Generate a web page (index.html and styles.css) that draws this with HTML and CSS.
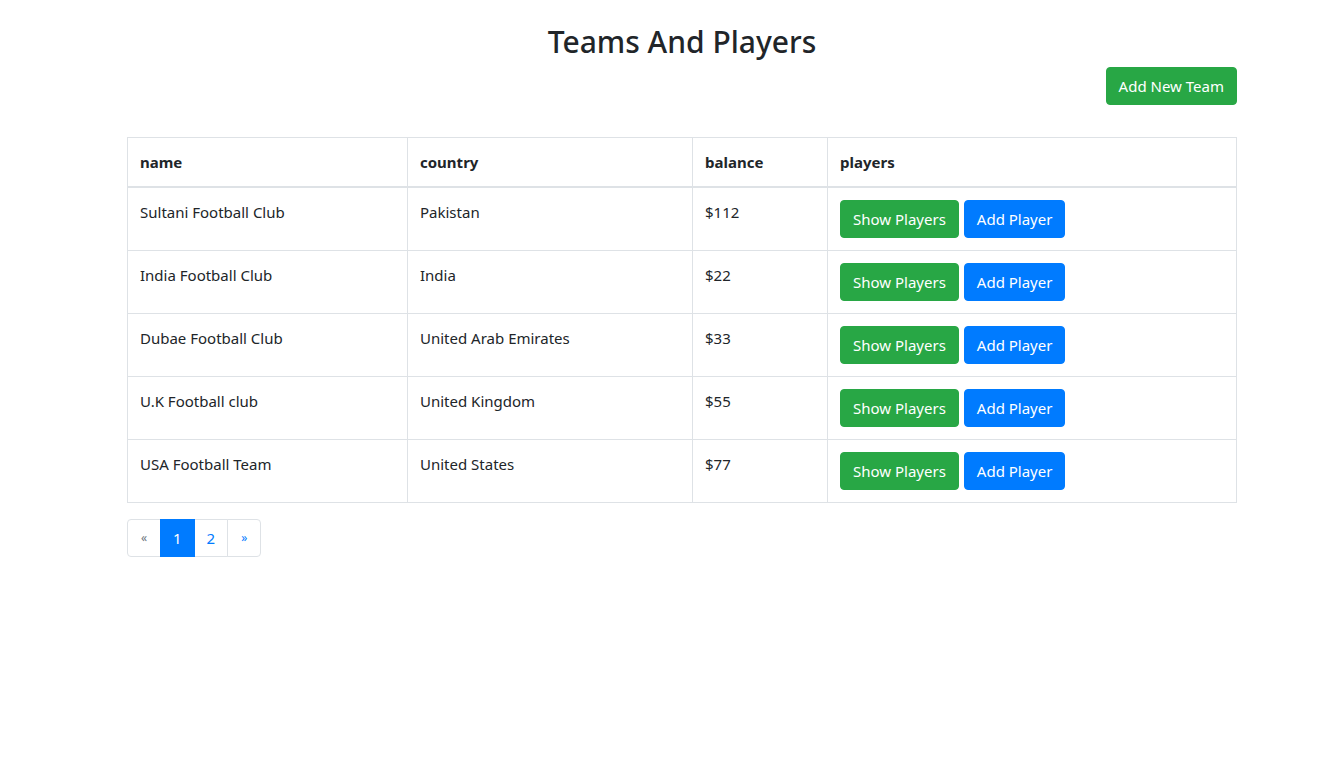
FILE: index.html
```html
<!DOCTYPE html>
<html lang="en">
<head>
<meta charset="utf-8">
<title>Teams And Players</title>
<link rel="stylesheet" href="styles.css">
</head>
<body>
<div class="page">
  <div class="container">
    <h2 class="title">Teams And Players</h2>
    <div class="actions">
      <button class="btn btn-success">Add New Team</button>
    </div>
    <table class="table">
      <thead>
        <tr>
          <th class="c-name">name</th>
          <th class="c-country">country</th>
          <th class="c-balance">balance</th>
          <th>players</th>
        </tr>
      </thead>
      <tbody>
        <tr>
          <td>Sultani Football Club</td>
          <td>Pakistan</td>
          <td>$112</td>
          <td><div class="btns"><button class="btn btn-success">Show Players</button><button class="btn btn-primary">Add Player</button></div></td>
        </tr>
        <tr>
          <td>India Football Club</td>
          <td>India</td>
          <td>$22</td>
          <td><div class="btns"><button class="btn btn-success">Show Players</button><button class="btn btn-primary">Add Player</button></div></td>
        </tr>
        <tr>
          <td>Dubae Football Club</td>
          <td>United Arab Emirates</td>
          <td>$33</td>
          <td><div class="btns"><button class="btn btn-success">Show Players</button><button class="btn btn-primary">Add Player</button></div></td>
        </tr>
        <tr>
          <td>U.K Football club</td>
          <td>United Kingdom</td>
          <td>$55</td>
          <td><div class="btns"><button class="btn btn-success">Show Players</button><button class="btn btn-primary">Add Player</button></div></td>
        </tr>
        <tr>
          <td>USA Football Team</td>
          <td>United States</td>
          <td>$77</td>
          <td><div class="btns"><button class="btn btn-success">Show Players</button><button class="btn btn-primary">Add Player</button></div></td>
        </tr>
      </tbody>
    </table>
    <ul class="pagination">
      <li class="page-item"><span class="page-link small disabled">«</span></li>
      <li class="page-item"><span class="page-link active">1</span></li>
      <li class="page-item"><span class="page-link">2</span></li>
      <li class="page-item"><span class="page-link small">»</span></li>
    </ul>
  </div>
</div>
</body>
</html>
```

FILE: styles.css
```css
* { box-sizing: border-box; }
html, body { margin: 0; padding: 0; background: #fff; }
body {
  font-family: "Noto Sans", "Open Sans", sans-serif;
  font-size: 15px;
  line-height: 24px;
  color: #212529;
}
.page { padding-left: 38px; }
.container { width: 1110px; margin: 0 auto; }
.title {
  margin: 23px 0 0;
  font-size: 30px;
  font-weight: 500;
  line-height: 38px;
  text-align: center;
}
.actions {
  display: flex;
  justify-content: flex-end;
  margin-top: 6px;
  margin-bottom: 32px;
}
.btn {
  font-family: inherit;
  font-size: 15px;
  line-height: 24px;
  padding: 6px 12px;
  border: 1px solid transparent;
  border-radius: 4px;
  color: #fff;
  cursor: pointer;
  height: 38px;
}
.btn-success { background: #28a745; border-color: #28a745; }
.btn-primary { background: #007bff; border-color: #007bff; }
.table {
  width: 100%;
  border-collapse: collapse;
  margin-bottom: 16px;
  border: 1px solid #dee2e6;
}
.table th, .table td {
  border: 1px solid #dee2e6;
  padding: 12px;
  text-align: left;
  vertical-align: top;
}
.table th { font-weight: 700; }
.table thead th { border-bottom: 2px solid #dee2e6; }
.c-name { width: 280px; }
.c-country { width: 285px; }
.c-balance { width: 135px; }
.btns { display: flex; gap: 5px; }
.pagination {
  list-style: none;
  display: flex;
  margin: 0;
  padding: 0;
}
.page-link {
  display: block;
  height: 38px;
  min-width: 34px;
  padding: 0 12px;
  line-height: 36px;
  text-align: center;
  color: #007bff;
  border: 1px solid #dee2e6;
  margin-left: -1px;
  background: #fff;
}
.page-item:first-child .page-link { margin-left: 0; border-radius: 4px 0 0 4px; }
.page-item:last-child .page-link { border-radius: 0 4px 4px 0; }
.page-link.small { font-size: 12px; }
.page-link.disabled { color: #6c757d; }
.page-link.active { background: #007bff; border-color: #007bff; color: #fff; position: relative; z-index: 1; }
```
